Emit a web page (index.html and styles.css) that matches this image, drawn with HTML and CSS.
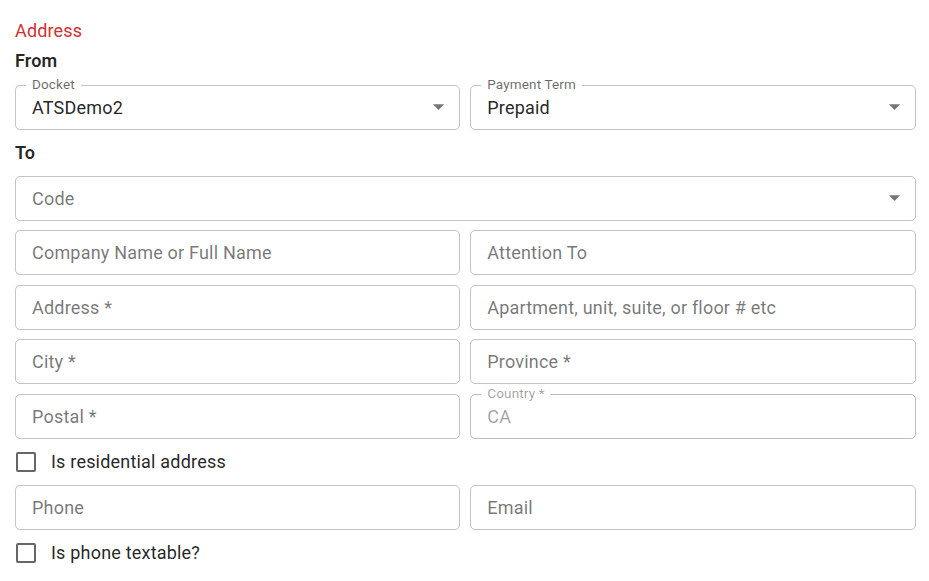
FILE: index.html
```html
<!DOCTYPE html>
<html lang="en">
<head>
<meta charset="utf-8">
<title>Address</title>
<link rel="stylesheet" href="styles.css">
</head>
<body>
<div class="form">
  <div class="section-title">Address</div>
  <div class="group-title from">From</div>
  <div class="row two">
    <div class="field select">
      <span class="label">Docket</span>
      <span class="value">ATSDemo2</span>
      <svg class="arrow" viewBox="0 0 24 24"><path d="M7 10l5 5 5-5z"/></svg>
    </div>
    <div class="field select">
      <span class="label">Payment Term</span>
      <span class="value">Prepaid</span>
      <svg class="arrow" viewBox="0 0 24 24"><path d="M7 10l5 5 5-5z"/></svg>
    </div>
  </div>
  <div class="group-title to">To</div>
  <div class="row one">
    <div class="field select">
      <span class="ph">Code</span>
      <svg class="arrow" viewBox="0 0 24 24"><path d="M7 10l5 5 5-5z"/></svg>
    </div>
  </div>
  <div class="row two gap">
    <div class="field"><span class="ph">Company Name or Full Name</span></div>
    <div class="field"><span class="ph">Attention To</span></div>
  </div>
  <div class="row two gap">
    <div class="field"><span class="ph">Address *</span></div>
    <div class="field"><span class="ph">Apartment, unit, suite, or floor # etc</span></div>
  </div>
  <div class="row two gap">
    <div class="field"><span class="ph">City *</span></div>
    <div class="field"><span class="ph">Province *</span></div>
  </div>
  <div class="row two gap">
    <div class="field"><span class="ph">Postal *</span></div>
    <div class="field disabled">
      <span class="label">Country *</span>
      <span class="value">CA</span>
    </div>
  </div>
  <label class="check">
    <span class="box"></span>
    <span class="check-text">Is residential address</span>
  </label>
  <div class="row two">
    <div class="field"><span class="ph">Phone</span></div>
    <div class="field"><span class="ph">Email</span></div>
  </div>
  <label class="check">
    <span class="box"></span>
    <span class="check-text">Is phone textable?</span>
  </label>
</div>
</body>
</html>
```

FILE: styles.css
```css
* { box-sizing: border-box; }
html, body { margin: 0; background: #fff; }
body {
  font-family: Roboto, "Noto Sans", "Liberation Sans", sans-serif;
  color: rgba(0, 0, 0, 0.87);
}
.form {
  display: flex;
  flex-direction: column;
  padding: 19px 13.5px 0 15px;
}
.section-title {
  font-size: 18px;
  line-height: 24px;
  color: #d32f2f;
  letter-spacing: 0.15px;
}
.group-title {
  font-size: 18px;
  line-height: 24px;
  font-weight: 600;
  letter-spacing: 0.15px;
}
.group-title.from { margin-top: 6px; margin-bottom: 11.5px; }
.group-title.to { margin-top: 11px; margin-bottom: 11px; }
.row {
  display: grid;
  gap: 10px;
}
.row.two { grid-template-columns: 1fr 1fr; }
.row.one { grid-template-columns: 1fr; }
.row.gap { margin-top: 9.5px; }
.field {
  position: relative;
  height: 45px;
  border: 1px solid rgba(0, 0, 0, 0.23);
  border-radius: 5px;
  display: flex;
  align-items: center;
  padding: 0 16px;
  font-size: 18px;
  letter-spacing: 0.2px;
}
.field .value { color: rgba(0, 0, 0, 0.87); }
.field .ph { color: rgba(0, 0, 0, 0.55); }
.field .label {
  position: absolute;
  left: 10px;
  top: -10px;
  padding: 0 6px;
  background: #fff;
  font-size: 13.5px;
  line-height: 16px;
  color: rgba(0, 0, 0, 0.6);
  letter-spacing: 0.15px;
}
.field.disabled { border-color: rgba(0, 0, 0, 0.26); }
.field.disabled .label,
.field.disabled .value { color: rgba(0, 0, 0, 0.38); }
.arrow {
  position: absolute;
  right: 7px;
  top: 50%;
  width: 27px;
  height: 27px;
  margin-top: -14px;
  fill: rgba(0, 0, 0, 0.54);
}
.check {
  display: flex;
  align-items: center;
  height: 46px;
  padding-left: 1px;
}
.box {
  width: 20px;
  height: 20px;
  border: 2px solid rgba(0, 0, 0, 0.6);
  border-radius: 2px;
  flex: none;
}
.check-text {
  margin-left: 15px;
  font-size: 18px;
  letter-spacing: 0.2px;
  color: rgba(0, 0, 0, 0.87);
}
```
